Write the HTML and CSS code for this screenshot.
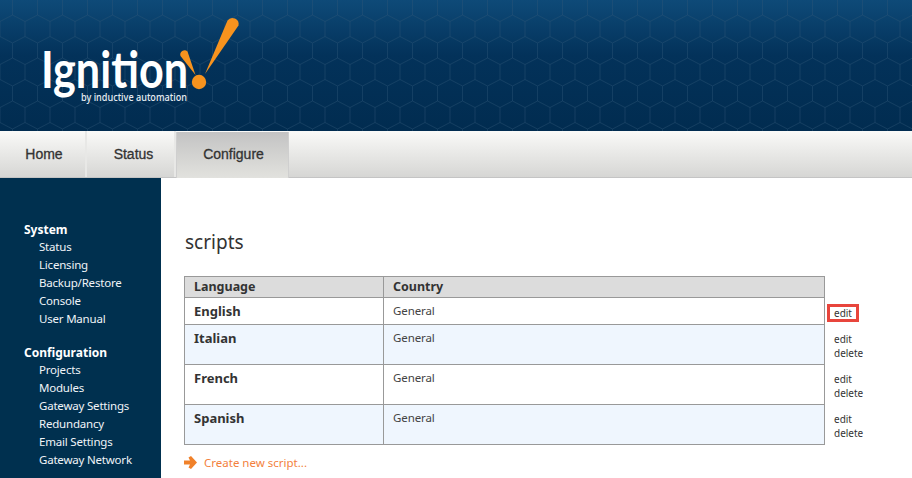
FILE: index.html
```html
<!DOCTYPE html>
<html lang="en">
<head>
<meta charset="utf-8">
<title>Ignition - scripts</title>
<link rel="stylesheet" href="styles.css">
</head>
<body>
<header class="banner">
  <svg class="banner-art" width="912" height="131" viewBox="0 0 912 131" xmlns="http://www.w3.org/2000/svg">
    <defs>
      <linearGradient id="bannerFill" x1="0" y1="0" x2="0" y2="1">
        <stop offset="0" stop-color="#0e4a78"/>
        <stop offset="0.42" stop-color="#03325a"/>
        <stop offset="1" stop-color="#012c50"/>
      </linearGradient>
      <pattern id="hex" width="25" height="43" patternUnits="userSpaceOnUse" y="0">
        <path d="M12.5 0V15L25 21.5V36.5L12.5 43M12.5 15L0 21.5V36.5L12.5 43" fill="none" stroke="#2d5578" stroke-opacity="0.42" stroke-width="1"/>
      </pattern>
    </defs>
    <rect width="912" height="131" fill="url(#bannerFill)"/>
    <rect width="912" height="131" fill="url(#hex)"/>
    <text class="logo-word" x="41" y="88" textLength="147" lengthAdjust="spacingAndGlyphs">Ignition</text>
    <text class="logo-sub" x="81" y="101" textLength="106" lengthAdjust="spacingAndGlyphs">by inductive automation</text>
    <path d="M227.500 20.500A6.200 6.200 0 0 1 238.500 25.500L205 74Z" fill="#f7931e"/>
    <path d="M180.500 56A4.300 4.300 0 0 1 187.500 51.500L195.500 75Z" fill="#f7931e"/>
    <circle cx="199" cy="82" r="7.200" fill="#f7931e"/>
  </svg>
</header>

<nav class="tabs">
  <a class="tab tab-home">Home</a>
  <a class="tab tab-status">Status</a>
  <a class="tab tab-active">Configure</a>
</nav>

<div class="layout">
  <aside class="sidebar">
    <section class="side-group">
      <h3 class="side-title">System</h3>
      <a class="side-link">Status</a>
      <a class="side-link">Licensing</a>
      <a class="side-link">Backup/Restore</a>
      <a class="side-link">Console</a>
      <a class="side-link">User Manual</a>
    </section>
    <section class="side-group">
      <h3 class="side-title">Configuration</h3>
      <a class="side-link">Projects</a>
      <a class="side-link">Modules</a>
      <a class="side-link">Gateway Settings</a>
      <a class="side-link">Redundancy</a>
      <a class="side-link">Email Settings</a>
      <a class="side-link">Gateway Network</a>
    </section>
  </aside>

  <main class="content">
    <h1 class="page-title">scripts</h1>
    <table class="data">
      <thead>
        <tr><th class="col-lang">Language</th><th class="col-country">Country</th><th class="col-actions"></th></tr>
      </thead>
      <tbody>
        <tr class="row-first"><td class="lang">English</td><td class="country">General</td><td class="actions"><a class="action flagged">edit</a></td></tr>
        <tr class="row-alt"><td class="lang">Italian</td><td class="country">General</td><td class="actions"><a class="action">edit</a><a class="action">delete</a></td></tr>
        <tr><td class="lang">French</td><td class="country">General</td><td class="actions"><a class="action">edit</a><a class="action">delete</a></td></tr>
        <tr class="row-alt"><td class="lang">Spanish</td><td class="country">General</td><td class="actions"><a class="action">edit</a><a class="action">delete</a></td></tr>
      </tbody>
    </table>
    <a class="create">
      <svg class="create-arrow" width="13" height="13" viewBox="0 0 13 13" xmlns="http://www.w3.org/2000/svg"><path d="M0 4.500H6L4.500 1.500L7 0L13 6.500L7 13L4.500 11.500L6 8.500H0Z" fill="#f0812a"/></svg>
      <span>Create new script...</span>
    </a>
  </main>
</div>
</body>
</html>
```
FILE: styles.css
```css
* { box-sizing: border-box; }
html, body { margin: 0; height: 100%; }
body {
  overflow: hidden;
  display: flex;
  flex-direction: column;
  background: #fff;
  color: #333;
  font-family: "Noto Sans", sans-serif;
  font-size: 12px;
}
.banner { height: 131px; flex: none; }
.banner-art { display: block; }
.logo-word { font-family: Lato, sans-serif; font-size: 51px; font-weight: 700; fill: #fff; }
.logo-sub { font-family: "Noto Sans", sans-serif; font-size: 10.500px; font-weight: 500; fill: #e6edf2; }

.tabs {
  flex: none;
  height: 47px;
  display: flex;
  background: linear-gradient(#fafaf8, #d6d6d4);
  border-bottom: 1px solid #c4c4c4;
  font-family: "Liberation Sans", sans-serif;
  font-size: 14px;
  -webkit-text-stroke: 0.3px #333;
  color: #333;
}
.tab { display: flex; align-items: center; justify-content: center; padding-bottom: 1px; }
.tab-home { width: 87px; border-right: 2px solid #e8e8e6; padding-left: 3px; }
.tab-status { width: 89px; border-right: 2px solid #e8e8e6; padding-left: 6px; }
.tab-active {
  width: 113px;
  margin-top: 1px;
  margin-bottom: -1px;
  background: linear-gradient(#c3c3c3, #e2e2de);
  border-right: 1px solid #cfcfcf;
  border-left: 1px solid #cfcfcf;
  padding-left: 2px;
  padding-bottom: 2px;
}

.layout { flex: 1; display: flex; min-height: 0; }
.sidebar {
  width: 161px;
  flex: none;
  background: #00304f;
  color: #fff;
  padding: 43px 0 0 24px;
  display: flex;
  flex-direction: column;
  gap: 15px;
}
.side-title { margin: 0; font-size: 12px; line-height: 18px; font-weight: bold; color: #fff; }
.side-link { display: block; padding: 0 0 2px 15px; font-size: 11.500px; letter-spacing: -0.200px; line-height: 16px; color: #f0f4f8; white-space: nowrap; }

.content { flex: 1; padding: 0 0 0 23px; min-width: 0; }
.page-title { margin: 52px 0 22px 1px; font-size: 19px; line-height: 24px; font-weight: normal; color: #333; }

.data { border-collapse: collapse; table-layout: fixed; width: 689px; }
.col-lang { width: 199px; }
.col-country { width: 441px; }
.col-actions { width: 49px; }
.data th {
  height: 21px;
  padding: 0 9px 1px;
  text-align: left;
  font-size: 12.500px;
  line-height: 19px;
  background: #dcdcdc;
  border: 1px solid #999;
}
.data th.col-actions { background: none; border: 0; border-left: 1px solid #999; }
.data td { vertical-align: top; border: 1px solid #999; padding: 5px 9px 0; height: 40px; line-height: 16px; }
.row-first td { height: 27px; }
.row-alt td { background: #eff6fe; }
.data td.lang { font-weight: bold; font-size: 13px; }
.data td.country { color: #444; font-size: 11.500px; letter-spacing: -0.100px; }
.data td.actions { background: #fff; border: 0; border-left: 1px solid #999; padding: 7px 0 0 9px; font-size: 10px; line-height: 14px; }
.action { display: block; color: #333; }
.flagged { width: 32px; height: 18px; margin: -1px 0 0 -7px; padding-left: 4px; border: 3px solid #e8453c; line-height: 12px; }
.create { display: flex; align-items: center; gap: 7px; margin-top: 10px; color: #f37f3d; font-size: 11.500px; }
.create-arrow { flex: none; }
```
